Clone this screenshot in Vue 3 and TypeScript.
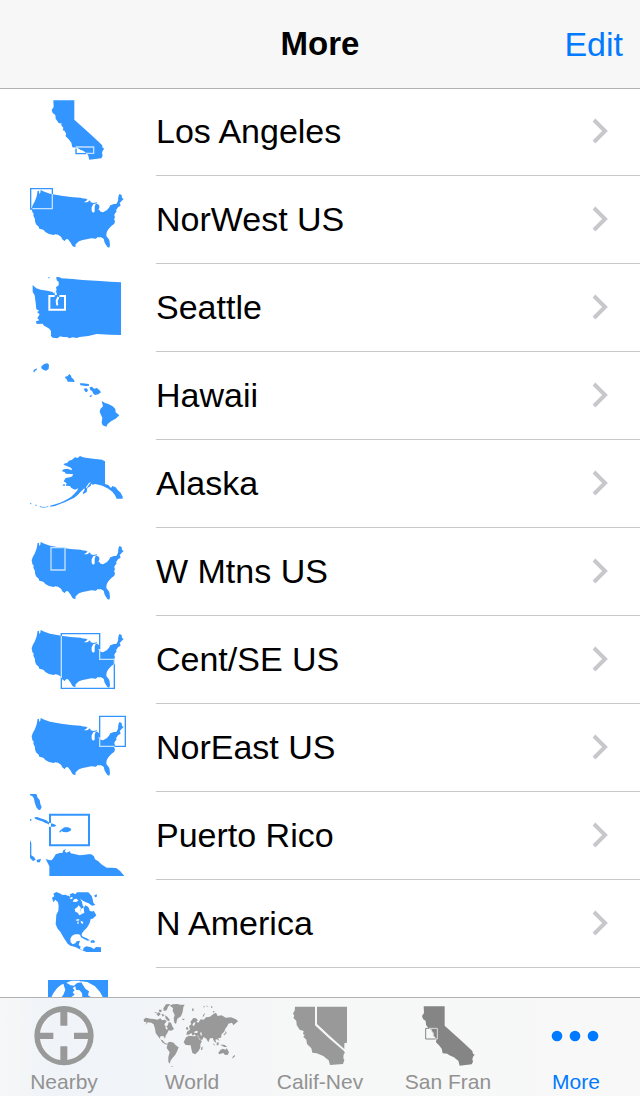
<script setup lang="ts">
import { ref } from 'vue'

interface Shape {
  d: string
  kind: 'fill' | 'gap' | 'line' | 'pale' | 'cut'
}

interface Region {
  name: string
  box: string
  shift?: string
  shapes: Shape[]
}

const usa =
  'M113 44L117 45 118 54 121 50 122 42 133 47 150 53 167 56 184 59 212 63 242 65 246 67 258 68 263 71 252 79 262 79 270 73 272 79 280 81 290 79 292 82 280 84 275 94 275 105 279 110 284 107 284 92 287 84 293 84 298 89 298 96 295 101 299 103 302 107 309 109 320 103 327 95 331 88 342 84 349 84 354 74 355 62 358 54 365 57 366 66 371 69 364 76 359 81 362 89 354 94 348 103 350 107 345 112 343 118 345 124 342 130 345 135 343 143 334 150 325 160 320 169 319 180 328 192 330 206 328 215 322 213 314 200 311 188 303 184 292 184 288 188 274 187 260 190 248 192 237 196 227 205 226 214 218 211 211 199 204 190 199 189 194 195 188 191 183 182 174 176 166 175 161 177 147 174 136 168 130 161 118 158 116 152 108 145 105 136 105 129 100 119 101 113 97 108 95 97 98 88 105 75 110 61Z'

const california =
  'M160 31H223V89L248 112 274 135 306 165 308 173 313 176 308 182 306 189 308 197 304 205 268 209 264 194 257 189 251 184 237 178 231 173 217 172 214 158 206 148 197 139 198 130 192 121 188 122 190 113 183 105 186 101 176 99 167 86 166 75 158 69 155 60 161 51Z'

const regions: Region[] = [
  {
    name: 'Los Angeles',
    box: '0 -6 396 264',
    shapes: [
      { kind: 'fill', d: california },
      { kind: 'gap', d: 'M229 172L240 179 250 183 258 190H229Z' },
      { kind: 'pale', d: 'M229 171H281V190H229Z' },
      { kind: 'line', d: 'M228 176V191H258' },
    ],
  },
  {
    name: 'NorWest US',
    box: '0 0 396 264',
    shapes: [
      { kind: 'fill', d: usa },
      { kind: 'line', d: 'M97 99H92V38H157V54' },
      { kind: 'pale', d: 'M97 98H157V54' },
    ],
  },
  {
    name: 'Seattle',
    box: '0 0 396 264',
    shapes: [
      {
        kind: 'fill',
        d: 'M98 63L109 73 122 77 142 80 158 84 160 88 165 82 170 79 168 70 176 64 176 53 171 50 168 40 177 39 184 43 218 45 248 48 300 51 331 53 363 55V213L331 212 290 210 265 216 239 219 230 222 218 220 208 223 201 219 189 219 181 217 172 223 158 221 153 216V201L148 194 138 188 132 185 128 179 110 180 108 172 118 169 112 163 119 151 111 144 118 140 109 136 107 116 104 94 98 84ZM145 40H149V43H145Z',
      },
      { kind: 'cut', d: 'M164 96H148V137H195V96H178M165 82L168 93M175 99L170 111 172 124' },
    ],
  },
  {
    name: 'Hawaii',
    box: '0 264 396 264',
    shapes: [
      {
        kind: 'fill',
        d: 'M100 321L102 317 107 315 111 313 110 318 105 321 102 326ZM124 307L129 303 134 299 142 298 147 302 146 314 139 320 131 318 124 313ZM195 338L202 337 208 330 213 335 215 341 220 345 224 352 222 354 212 353 203 353 200 346 196 343ZM240 358L248 358 266 360 268 365 258 366 241 364ZM251 374L260 373 264 379 260 385 256 383ZM269 370L276 368 282 374 291 372 300 380 303 385 295 391 285 393 279 388 276 380 271 379ZM268 397L273 393 277 396 272 399ZM305 411L315 417 325 420 338 427 346 435 347 445 358 454 347 464 334 471 323 480 319 488 308 484 305 476 307 461 299 444 301 435 309 427Z',
      },
    ],
  },
  {
    name: 'Alaska',
    box: '0 0 396 264',
    shapes: [
      {
        kind: 'fill',
        d: 'M190 72L202 68 207 62 215 60 225 52 233 54 240 48 249 52 262 54 280 56 294 58 306 59 315 64V132L325 135 333 144 337 138 347 142 353 150 362 158 368 170 368 176 350 176 345 166 337 155 325 146 307 137 286 132 278 134 274 131 272 138 262 144 260 156 250 162 248 159 254 149 253 145 242 155 233 165 223 173 210 179 196 186 180 192 165 198 151 200 150 197 166 193 184 187 199 179 213 171 223 161 231 152 235 145 225 149 214 144 210 138 197 137 200 130 191 124 197 114 210 112 217 109 219 102 213 102 197 101 195 97 185 93 191 88 202 86 216 91 214 84 202 79 194 76ZM188 134L194 132 195 137 189 137ZM90 188L96 192 91 193ZM106 194H110V197H106ZM119 198L128 201 140 200 146 197 144 201 130 203 120 201Z',
      },
      { kind: 'gap', d: 'M258 142L267 129 273 127 266 136 260 145Z' },
    ],
  },
  {
    name: 'W Mtns US',
    box: '0 0 396 264',
    shapes: [
      { kind: 'fill', d: usa },
      { kind: 'pale', d: 'M153 59H195V126H153Z' },
    ],
  },
  {
    name: 'Cent/SE US',
    box: '0 0 396 264',
    shapes: [
      { kind: 'fill', d: usa },
      { kind: 'line', d: 'M184 60V53H299V100M343 145V217H184V185' },
      { kind: 'pale', d: 'M184 60V185M299 101V130H343V143' },
    ],
  },
  {
    name: 'NorEast US',
    box: '0 0 396 264',
    shapes: [
      { kind: 'fill', d: usa },
      { kind: 'line', d: 'M299 101V37H376V127H343' },
      { kind: 'pale', d: 'M299 101V127H343' },
    ],
  },
  {
    name: 'Puerto Rico',
    box: '0 36 396 264',
    shapes: [
      {
        kind: 'fill',
        d: 'M90 42H109L113 53 119 60 121 72 125 81 121 89 116 90 109 82 104 67 102 56 97 48 90 46ZM103 112L112 111 119 114 129 117 139 121 149 129 159 131 169 136 164 140 150 140 145 132 136 129 126 124 116 121 106 117ZM90 117H94V122H90ZM178 154L186 147 193 142 205 142 214 147 211 153 201 157 190 156 185 153 180 158ZM90 180L94 190V226L102 231 107 239 99 243 90 234ZM110 240L123 236 120 247 111 247ZM137 237L147 240 155 241 162 232 167 223 179 219 187 219 190 211 198 207 194 214 199 218 210 214 212 220 226 223 239 226 248 225 265 223 274 223 282 229 285 238 295 244 304 253 320 263 337 263 350 265 361 274 373 288H148V259Z',
      },
      { kind: 'fill', d: 'M147 101H270V199H147ZM153 107V193H264V107Z' },
      { kind: 'gap', d: 'M147 129H153V140H147Z' },
    ],
  },
  {
    name: 'N America',
    box: '0 0 396 264',
    shapes: [
      {
        kind: 'fill',
        d: 'M156 53L163 49 160 41 169 36 182 41 187 45 196 44 205 48 210 43 218 39 226 43 231 37H265L275 48 278 58 280 68 286 75 276 77 266 70 256 66 245 60 240 55 246 66 248 76 252 82 244 86 240 94 246 102 253 98 251 84 256 76 264 80 269 89 276 95 281 92 289 106 283 112 278 116 272 117 270 126 266 135 260 144 251 153 245 161 246 168 236 163 225 163 216 167 211 176 212 187 218 193 226 190 230 184 240 182 236 195 242 200 240 207 249 211 251 203 259 199 273 202 282 207 288 201 303 202V216H259L252 213 239 208 226 201 211 197 203 191 196 181 188 168 181 155 173 146 167 133 168 119 169 104 175 92 176 78 174 67 166 59 160 67ZM240 165L251 171 260 175 270 181 263 182 252 177 243 172ZM272 182L280 180 285 184 283 188H272ZM283 46L291 43 290 51 285 52Z',
      },
      {
        kind: 'gap',
        d: 'M208 55L215 51 219 53 215 58ZM222 58L230 56 235 62 228 66 218 65ZM224 87L232 82 236 76 243 84 240 94 246 102 238 106 233 98 226 95ZM226 120L235 117 239 120 233 123ZM232 126L236 124 235 133 232 131ZM242 122L250 126 248 132 243 129ZM207 44L212 47 207 50ZM267 89L275 87 276 92 271 94Z',
      },
    ],
  },
]

const globeShapes: Shape[] = [
  { kind: 'fill', d: 'M144 300H324V480H144Z' },
  {
    kind: 'gap',
    d: 'M152 356L160 340 171 325 183 314 191 312 193 321 196 329 190 344 181 356ZM199 308L214 302 238 302 245 307 231 309 222 317 212 316ZM242 304L262 306 285 319 300 336 311 356H264L274 352 264 346 267 334 256 326 249 315ZM208 356L217 349 224 344 218 337 224 331 218 324 226 319 228 329 239 331 246 340 247 349 241 356Z',
  },
]

const tabs: Region[] = [
  {
    name: 'Nearby',
    box: '0 354 384 216',
    shapes: [
      {
        kind: 'fill',
        d: 'M192 378A89 89 0 1 1 192 556A89 89 0 1 1 192 378ZM181 396V437H202V396A72 72 0 0 1 264 458H222V477H264A72 72 0 0 1 202 540V499H181V540A72 72 0 0 1 120 477H160V458H120A72 72 0 0 1 181 396Z',
      },
    ],
  },
  {
    name: 'World',
    box: '-6 24 384 216',
    shapes: [
      {
        kind: 'fill',
        d: 'M41 88L48 83 61 86 72 87 82 89 91 85 97 91 105 89 110 94 103 103 108 112 114 104 116 96 123 98 127 109 132 117 124 122 116 121 112 129 107 137 105 146 100 138 91 139 90 148 98 151 104 158 112 162 109 164 98 158 91 148 84 139 77 129 75 116 71 103 64 98 54 97 46 104 50 95 42 96ZM113 158L120 155 131 158 137 166 146 172 142 182 136 194 128 203 121 213 120 221 115 216 115 201 119 187 110 174 112 165ZM119 47L128 43 141 42 151 44 164 44 160 52 158 66 153 79 142 86 138 102 133 98 131 86 134 75 128 63 129 54ZM79 72L87 66 92 73 85 79ZM94 71L104 75 98 80ZM105 76L112 80 120 90 115 94 107 86ZM100 55L108 43 121 42 114 51 110 61 101 63ZM73 68L79 65 80 70ZM86 59L95 59 94 67 88 65Z',
      },
      {
        kind: 'fill',
        d: 'M161 157L168 142 177 137 191 139 205 137 207 148 216 153 211 163 211 173 205 184 196 193 187 189 184 176 182 166 167 165ZM213 174L218 169 217 179 213 180ZM169 134L171 125 180 119 177 108 184 102 181 96 190 84 198 85 204 91 199 95 205 98 212 88 221 89 228 82 240 80 250 72 258 68 263 78 275 76 287 83 303 82 318 88 324 94 315 101 310 106 306 98 295 101 292 108 286 116 282 126 275 132 273 143 264 145 269 153 261 148 256 149 259 159 252 154 248 144 240 145 235 157 229 146 221 141 217 149 210 149 206 140 198 137 193 133 188 137 184 129 176 134ZM168 112L174 112 175 119 169 119ZM186 57L190 54 191 62 187 64ZM218 83L219 75 226 68 222 77ZM248 63L254 64 251 69ZM287 122L290 129 283 136 280 134 286 129ZM249 159L256 166 252 166ZM260 158L267 157 265 166 260 166ZM270 164L283 164 292 171 283 171ZM265 188L271 180 278 176 287 179 290 174 297 187 293 195 284 194 280 189 267 193ZM309 199L315 194 314 200 306 206ZM157 86L164 86 162 91 157 89ZM122 230L128 227 127 231ZM220 49H224V52H220ZM228 47L236 48 231 50ZM243 49H247V53H243Z',
      },
      { kind: 'gap', d: 'M187 105L191 98 197 97 192 108ZM210 128L214 127 216 134 213 138ZM193 125L200 122 204 125 201 129 193 129ZM106 112L111 111 113 117 109 119Z' },
    ],
  },
  {
    name: 'Calif-Nev',
    box: '378 24 384 216',
    shapes: [
      {
        kind: 'fill',
        d: 'M495 50H555V106L597 145 641 182 645 188 641 193 640 204 643 211 639 222 600 225 596 211 588 205 580 198 560 190 547 188 544 175 531 162 529 149 520 140 524 135 519 132 521 123 509 119 500 105 499 93 490 83 493 78 489 70 494 62ZM561 50H651V158L643 160V177L597 136 561 102Z',
      },
    ],
  },
  {
    name: 'San Fran',
    box: '41 6 384 216',
    shapes: [
      { kind: 'fill', d: california },
      { kind: 'gap', d: 'M166 97H178L182 106 188 112 190 122 194 129H166Z' },
      { kind: 'line', d: 'M166 97H201V129H166Z' },
      { kind: 'pale', d: 'M176 97H201V129H194M183 104L188 110 188 116' },
    ],
  },
  {
    name: 'More',
    box: '396 24 384 216',
    shapes: [
      {
        kind: 'fill',
        d: 'M531 122A16 16 0 1 1 531 154A16 16 0 1 1 531 122ZM585 122A16 16 0 1 1 585 154A16 16 0 1 1 585 122ZM639 122A16 16 0 1 1 639 154A16 16 0 1 1 639 122Z',
      },
    ],
  },
]

const current = ref('More')
</script>

<template>
  <div class="app">
    <header class="navbar">
      <h1 class="title">More</h1>
      <button type="button" class="edit">Edit</button>
    </header>

    <main class="content">
      <ul class="list">
        <li v-for="region in regions" :key="region.name">
          <a class="row" href="#">
            <svg class="map" :viewBox="region.box" aria-hidden="true">
              <path
                v-for="(shape, i) in region.shapes"
                :key="i"
                :class="shape.kind"
                :d="shape.d"
                fill-rule="evenodd"
              />
            </svg>
            <span class="cell">
              <span class="name">{{ region.name }}</span>
              <svg class="chevron" viewBox="0 0 20 28" aria-hidden="true">
                <path d="M4 3L15 14L4 25" />
              </svg>
            </span>
          </a>
        </li>
        <li class="row" aria-hidden="true">
          <svg class="map" viewBox="0 264 396 264">
            <path v-for="(shape, i) in globeShapes" :key="i" :class="shape.kind" :d="shape.d" />
          </svg>
        </li>
      </ul>
    </main>

    <nav class="tabbar">
      <button
        v-for="tab in tabs"
        :key="tab.name"
        type="button"
        class="tab"
        :class="{ active: tab.name === current, dark: tab.name === 'San Fran' }"
        @click="current = tab.name"
      >
        <svg class="tab-icon" :viewBox="tab.box" aria-hidden="true">
          <path
            v-for="(shape, i) in tab.shapes"
            :key="i"
            :class="shape.kind"
            :d="shape.d"
            fill-rule="evenodd"
          />
        </svg>
        <span>{{ tab.name }}</span>
      </button>
    </nav>
  </div>
</template>

<style>
body {
  margin: 0;
  background: #fff;
}
</style>

<style scoped>
.app {
  display: flex;
  flex-direction: column;
  height: 100vh;
  color: #000;
  background: #fff;
  font-family: 'Liberation Sans', Arial, sans-serif;
  --ink: #3395ff;
  --pale: #c4e1ff;
  --ground: #fff;
}

button {
  padding: 0;
  border: 0;
  background: none;
  font: inherit;
  cursor: pointer;
}

.navbar {
  display: grid;
  grid-template-columns: 1fr auto 1fr;
  align-items: center;
  flex: none;
  height: 88px;
  padding: 0 17px;
  border-bottom: 1px solid #b2b2b2;
  background: #f7f7f7;
}

.title {
  grid-column: 2;
  margin: 0;
  font-size: 33px;
  line-height: 40px;
  font-weight: 700;
}

.edit {
  justify-self: end;
  color: #007aff;
  font-size: 34px;
  line-height: 40px;
}

.content {
  flex: 1;
  min-height: 0;
  overflow-y: auto;
  scrollbar-width: none;
}

.list {
  margin: -1px 0 0;
  padding: 0;
  list-style: none;
}

.row {
  display: flex;
  height: 88px;
  color: inherit;
  text-decoration: none;
}

.map {
  flex: none;
  width: 132px;
  height: 88px;
  margin-right: 24px;
}

.cell {
  display: flex;
  flex: 1;
  align-items: center;
  justify-content: space-between;
  box-sizing: border-box;
  height: 88px;
  padding: 0 30px 2px 0;
  border-bottom: 1px solid #c8c7cc;
}

.name {
  font-size: 34px;
  line-height: 40px;
}

.chevron {
  width: 20px;
  height: 28px;
  fill: none;
  stroke: #c7c7cc;
  stroke-width: 4;
}

.fill {
  fill: var(--ink);
}

.gap {
  fill: var(--ground);
}

.line {
  fill: none;
  stroke: var(--ink);
  stroke-width: 4;
}

.pale {
  fill: none;
  stroke: var(--pale);
  stroke-width: 4;
}

.cut {
  fill: none;
  stroke: var(--ground);
  stroke-width: 6;
}

.tabbar {
  display: flex;
  flex: none;
  height: 98px;
  border-top: 1px solid #b2b2b2;
  background: linear-gradient(90deg, #f6f7f7 0%, #f0f4f8 8%, #f1f4f8 18%, #f6f7f7 45%, #f8f8f8 100%);
}

.tab {
  display: flex;
  flex: 1;
  flex-direction: column;
  align-items: center;
  color: #929292;
  font-size: 21px;
  line-height: 24px;
  --ink: #999;
  --pale: #ddd;
  --ground: #f7f7f7;
}

.tab .line,
.tab .pale {
  stroke-width: 3;
}

.dark {
  --ink: #858585;
}

.tab.active {
  color: #007aff;
  --ink: #007aff;
}
</style>
